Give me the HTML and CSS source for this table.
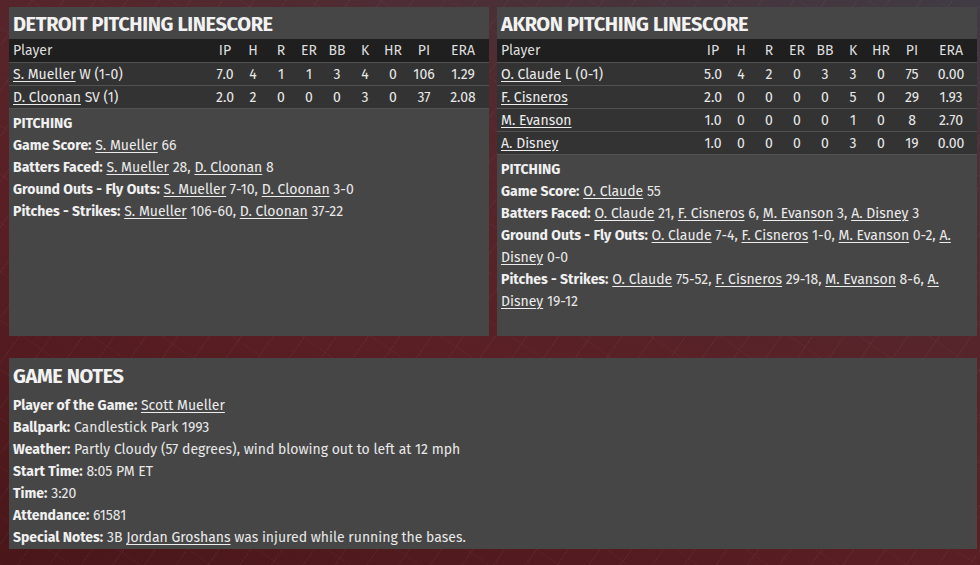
FILE: index.html
```html
<!DOCTYPE html>
<html lang="en">
<head>
<meta charset="utf-8">
<title>Pitching Linescore</title>
<link rel="stylesheet" href="styles.css">
</head>
<body>
<div class="page">
  <div class="top">
    <section class="panel">
      <h2 class="panel-title">DETROIT PITCHING LINESCORE</h2>
      <div class="linescore">
        <div class="row head"><span class="player">Player</span><span>IP</span><span>H</span><span>R</span><span>ER</span><span>BB</span><span>K</span><span>HR</span><span>PI</span><span>ERA</span></div>
        <div class="row"><span class="player"><a href="#">S. Mueller</a> W (1-0)</span><span>7.0</span><span>4</span><span>1</span><span>1</span><span>3</span><span>4</span><span>0</span><span>106</span><span>1.29</span></div>
        <div class="row"><span class="player"><a href="#">D. Cloonan</a> SV (1)</span><span>2.0</span><span>2</span><span>0</span><span>0</span><span>0</span><span>3</span><span>0</span><span>37</span><span>2.08</span></div>
      </div>
      <div class="notes">
        <div class="notes-heading">PITCHING</div>
        <p><b>Game Score:</b> <a href="#">S. Mueller</a> 66</p>
        <p><b>Batters Faced:</b> <a href="#">S. Mueller</a> 28, <a href="#">D. Cloonan</a> 8</p>
        <p><b>Ground Outs - Fly Outs:</b> <a href="#">S. Mueller</a> 7-10, <a href="#">D. Cloonan</a> 3-0</p>
        <p><b>Pitches - Strikes:</b> <a href="#">S. Mueller</a> 106-60, <a href="#">D. Cloonan</a> 37-22</p>
      </div>
    </section>
    <section class="panel">
      <h2 class="panel-title">AKRON PITCHING LINESCORE</h2>
      <div class="linescore">
        <div class="row head"><span class="player">Player</span><span>IP</span><span>H</span><span>R</span><span>ER</span><span>BB</span><span>K</span><span>HR</span><span>PI</span><span>ERA</span></div>
        <div class="row"><span class="player"><a href="#">O. Claude</a> L (0-1)</span><span>5.0</span><span>4</span><span>2</span><span>0</span><span>3</span><span>3</span><span>0</span><span>75</span><span>0.00</span></div>
        <div class="row"><span class="player"><a href="#">F. Cisneros</a></span><span>2.0</span><span>0</span><span>0</span><span>0</span><span>0</span><span>5</span><span>0</span><span>29</span><span>1.93</span></div>
        <div class="row"><span class="player"><a href="#">M. Evanson</a></span><span>1.0</span><span>0</span><span>0</span><span>0</span><span>0</span><span>1</span><span>0</span><span>8</span><span>2.70</span></div>
        <div class="row"><span class="player"><a href="#">A. Disney</a></span><span>1.0</span><span>0</span><span>0</span><span>0</span><span>0</span><span>3</span><span>0</span><span>19</span><span>0.00</span></div>
      </div>
      <div class="notes">
        <div class="notes-heading">PITCHING</div>
        <p><b>Game Score:</b> <a href="#">O. Claude</a> 55</p>
        <p><b>Batters Faced:</b> <a href="#">O. Claude</a> 21, <a href="#">F. Cisneros</a> 6, <a href="#">M. Evanson</a> 3, <a href="#">A. Disney</a> 3</p>
        <p><b>Ground Outs - Fly Outs:</b> <a href="#">O. Claude</a> 7-4, <a href="#">F. Cisneros</a> 1-0, <a href="#">M. Evanson</a> 0-2, <a href="#">A. Disney</a> 0-0</p>
        <p><b>Pitches - Strikes:</b> <a href="#">O. Claude</a> 75-52, <a href="#">F. Cisneros</a> 29-18, <a href="#">M. Evanson</a> 8-6, <a href="#">A. Disney</a> 19-12</p>
      </div>
    </section>
  </div>
  <section class="panel game-notes">
    <h2 class="panel-title">GAME NOTES</h2>
    <div class="notes">
      <p><b>Player of the Game:</b> <a href="#">Scott Mueller</a></p>
      <p><b>Ballpark:</b> Candlestick Park 1993</p>
      <p><b>Weather:</b> Partly Cloudy (57 degrees), wind blowing out to left at 12 mph</p>
      <p><b>Start Time:</b> 8:05 PM ET</p>
      <p><b>Time:</b> 3:20</p>
      <p><b>Attendance:</b> 61581</p>
      <p><b>Special Notes:</b> 3B <a href="#">Jordan Groshans</a> was injured while running the bases.</p>
    </div>
  </section>
</div>
</body>
</html>
```

FILE: styles.css
```css
* { box-sizing: border-box; }

html, body {
  margin: 0;
  height: 100%;
}

body {
  font-family: "Fira Sans", "Open Sans", "Noto Sans", sans-serif;
  font-size: 14px;
  color: #e8e8e8;
  background-color: #551f23;
  background-image:
    repeating-linear-gradient(125deg, rgba(255,255,255,0.035) 0 1px, transparent 1px 26px),
    repeating-linear-gradient(35deg, rgba(255,255,255,0.025) 0 1px, transparent 1px 40px),
    linear-gradient(200deg, #403b44 0%, #55262c 35%, #5a1f24 60%, #4a1619 100%);
  overflow: hidden;
}

.page {
  padding: 7px 3px 0 9px;
}

.top {
  display: grid;
  grid-template-columns: 480px 480px;
  gap: 8px;
}

.panel {
  background: #464646;
  height: 329px;
}

.panel-title {
  margin: 0;
  height: 32px;
  padding: 1px 4px 0;
  display: flex;
  align-items: center;
  font-family: "Fira Sans", "Roboto", sans-serif;
  font-weight: 700;
  font-size: 20px;
  letter-spacing: -0.4px;
  color: #f2f2f2;
}

.linescore {
  border-bottom: 1px solid #525252;
}

.row {
  display: grid;
  grid-template-columns: 1fr repeat(7, 28px) 34px 44px;
  height: 23px;
  padding: 0 4px;
  align-items: center;
  background: #333333;
  border-top: 1px solid #525252;
  text-align: center;
  white-space: nowrap;
}

.row.head {
  background: #1f1f1f;
  border-top: none;
  color: #dedede;
}

.row .player {
  text-align: left;
}

a {
  color: #ececec;
  text-decoration: underline;
  text-underline-offset: 2px;
}

.notes {
  padding: 4px 4px 0;
}

.notes p,
.notes-heading {
  margin: 0;
  line-height: 22px;
}

.notes-heading,
b {
  font-weight: 700;
  color: #f0f0f0;
}

.game-notes {
  margin-top: 22px;
  height: 191px;
}

.game-notes .panel-title {
  height: 35px;
}

.game-notes .notes {
  padding-top: 2px;
}
```
